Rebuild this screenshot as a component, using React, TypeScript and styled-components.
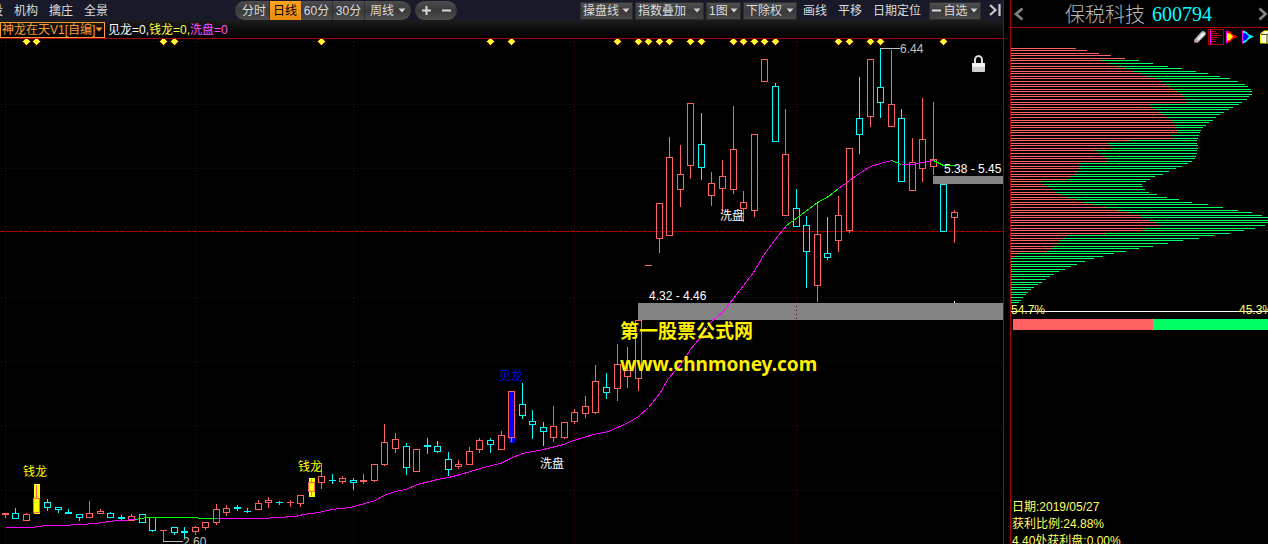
import React from 'react';
import styled, { createGlobalStyle } from 'styled-components';

const RED = '#ff6060';
const CYAN = '#00ffff';
const GREEN = '#00ff60';
const LINE = '#a80000';
const GRID = '#640000';

const Global = createGlobalStyle`
  * { box-sizing: border-box; }
  body { margin: 0; background: #000; }
  button, select, h1 { font: inherit; margin: 0; }
`;

const Page = styled.div`
  display: flex;
  gap: 6px;
  height: 100vh;
  overflow: hidden;
  background: #000;
  font: 12px/14px 'Liberation Sans', 'Noto Sans CJK SC', sans-serif;
  color: #dcdcdc;
  white-space: nowrap;
`;

const ChartPane = styled.main`
  flex: 1;
  min-width: 0;
  display: flex;
  flex-direction: column;
  border-right: 1px solid ${LINE};
`;

const Toolbar = styled.div`
  display: flex;
  align-items: center;
  height: 20px;
  background: #181a29;
`;

const MenuGroup = styled.nav<{ $width?: number }>`
  display: flex;
  gap: 11px;
  padding-top: 1px;
  ${(p) => p.$width && `width: ${p.$width}px;`}
`;

const MenuButton = styled.button<{ $clip?: boolean }>`
  padding: 0;
  border: 0;
  background: none;
  color: #dcdcdc;
  ${(p) => p.$clip && 'display: flex; justify-content: flex-end; width: 3px; overflow: hidden;'}
`;

const Pill = styled.div<{ $gap?: boolean }>`
  display: flex;
  align-items: center;
  height: 19px;
  margin-top: 1px;
  overflow: hidden;
  border-radius: 10px;
  background: linear-gradient(#4c4c4c, #3a3a3a 50%, #4e4e4e);
  ${(p) => p.$gap && 'margin-left: 4px; padding: 0 6px; gap: 10px;'}
`;

const Period = styled.button<{ $active?: boolean; $width: number }>`
  display: flex;
  align-items: center;
  justify-content: center;
  gap: 4px;
  width: ${(p) => p.$width}px;
  height: 19px;
  padding: 0;
  border: 0;
  border-right: 1px solid ${(p) => (p.$active ? '#f7941d' : '#303030')};
  background: ${(p) => (p.$active ? 'linear-gradient(#ffa51f, #e88a0c)' : 'none')};
  color: ${(p) => (p.$active ? '#000' : '#dcdcdc')};
  &:first-child { padding-left: 4px; }
  &:last-child { border-right: 0; }
`;

const RoundButton = styled.button`
  display: flex;
  align-items: center;
  justify-content: center;
  width: 10px;
  height: 19px;
  padding: 0;
  border: 0;
  background: none;
`;

const Tools = styled.div`
  display: flex;
  align-items: center;
  gap: 2px;
  margin-left: auto;
  padding-right: 2px;
`;

const ToolLinks = styled.div`
  display: flex;
  gap: 11px;
  padding: 1px 6px 0 4px;
`;

const DropButton = styled.button<{ $width: number }>`
  display: flex;
  align-items: center;
  justify-content: space-between;
  width: ${(p) => p.$width}px;
  height: 18px;
  margin-top: 1px;
  padding: 0 2px;
  border: 1px solid #2c2c2c;
  background: linear-gradient(#505050, #3a3a3a 50%, #464646);
  color: #dcdcdc;
`;

const EndButton = styled.button`
  display: flex;
  margin-left: 6px;
  padding: 0;
  border: 0;
  background: none;
`;

const FormulaBar = styled.div`
  display: flex;
  align-items: center;
  height: 19px;
  border-bottom: 1px solid ${LINE};
  background: linear-gradient(#1c1c1c, #000);
`;

const FormulaPicker = styled.label`
  display: flex;
  align-items: center;
  width: 105px;
  height: 16px;
  margin: 1px 3px 0 0;
  border: 1px solid #ff9933;
`;

const FormulaSelect = styled.select`
  appearance: none;
  width: 94px;
  height: 14px;
  padding: 0 0 0 1px;
  border: 0;
  outline: 0;
  background: none;
  color: #ff9933;
`;

const Reading = styled.span<{ $color: string }>`
  padding-top: 2px;
  color: ${(p) => p.$color};
`;

const Plot = styled.svg`
  flex: 1;
  min-height: 0;
  display: block;
  width: 100%;
  font-family: 'Liberation Sans', 'Noto Sans CJK SC', sans-serif;
`;

const SidePane = styled.aside`
  flex: 0 0 258px;
  display: flex;
  flex-direction: column;
  overflow: hidden;
  border-left: 1px solid ${LINE};
`;

const StockHeader = styled.header`
  display: flex;
  align-items: center;
  height: 28px;
  padding-left: 3px;
  border-bottom: 1px solid ${LINE};
`;

const StockTitle = styled.h1`
  display: flex;
  gap: 7px;
  width: 200px;
  margin: 0 -4px 0 41px;
  font: 300 20px/26px 'Noto Sans CJK SC', sans-serif;
  color: #b8b8b8;
`;

const Code = styled.span`
  font: 20px/26px 'Liberation Serif', serif;
  color: ${CYAN};
`;

const ArrowButton = styled.button<{ $next?: boolean }>`
  flex: none;
  display: flex;
  margin-left: ${(p) => (p.$next ? 14 : 0)}px;
  padding: 0;
  border: 0;
  background: none;
`;

const IconRow = styled.div`
  display: flex;
  align-items: center;
  height: 20px;
  padding: 0 0 2px 181px;
`;

const IconButton = styled.button<{ $active?: boolean }>`
  flex: none;
  display: flex;
  align-items: center;
  justify-content: center;
  width: 16px;
  height: 16px;
  padding: 0;
  border: 1px solid ${(p) => (p.$active ? LINE : 'transparent')};
  background: none;
`;

const Chips = styled.svg`
  display: block;
  width: 100%;
  height: 256px;
`;

const Ratio = styled.div`
  display: flex;
  justify-content: space-between;
  height: 15px;
  line-height: 13px;
  width: 262px;
  color: #ffff60;
  background: linear-gradient(#fff, #fff) 0 7px / 100% 1px no-repeat;
`;

const RatioBar = styled.div`
  display: flex;
  height: 11px;
  margin-left: 2px;
  background: ${GREEN};
`;

const RatioFill = styled.div`
  background: ${RED};
`;

const Summary = styled.div`
  margin-top: auto;
  height: 45px;
  padding-left: 1px;
  line-height: 17px;
  color: #ffff60;
`;

// [colour, high, body top, body bottom, low], one row for each trading day
type Candle = [string, number, number, number, number];
const r = RED;
const c = CYAN;
const candles: Candle[] = [
  [r, 513, 513, 514, 517], [c, 508, 513, 518, 518], [r, 513, 514, 520, 520], [r, 485, 498, 512, 512],
  [c, 499, 502, 507, 510], [c, 507, 507, 509, 512], [c, 509, 512, 513, 513], [c, 514, 514, 517, 520],
  [r, 501, 513, 517, 517], [r, 509, 511, 513, 513], [c, 512, 513, 517, 517], [c, 515, 517, 518, 520],
  [r, 514, 516, 520, 520], [c, 514, 514, 522, 522], [c, 517, 517, 530, 531], [r, 530, 530, 530, 541],
  [c, 527, 527, 532, 534], [c, 527, 531, 532, 538], [r, 526, 527, 531, 534], [r, 522, 522, 527, 529],
  [r, 504, 509, 522, 524], [r, 505, 508, 512, 515], [c, 505, 507, 508, 510], [c, 508, 511, 511, 512],
  [r, 500, 503, 509, 509], [r, 497, 500, 502, 507], [c, 501, 502, 502, 504], [r, 500, 502, 502, 506],
  [r, 495, 495, 503, 506], [r, 479, 482, 491, 495], [r, 463, 476, 482, 488], [c, 474, 480, 480, 483],
  [r, 476, 478, 481, 483], [c, 478, 480, 482, 489], [r, 474, 480, 481, 483], [r, 464, 464, 480, 481],
  [r, 424, 442, 464, 465], [r, 433, 439, 448, 452], [c, 443, 446, 467, 474], [r, 449, 449, 471, 471],
  [c, 438, 445, 446, 453], [c, 441, 446, 451, 452], [c, 452, 459, 469, 475], [r, 460, 464, 466, 468],
  [r, 447, 451, 464, 464], [r, 438, 440, 449, 452], [c, 438, 440, 444, 452], [r, 431, 435, 449, 449],
  [r, 391, 391, 437, 441], [c, 383, 404, 415, 418], [c, 410, 421, 424, 438], [c, 422, 427, 431, 445],
  [r, 406, 426, 437, 441], [r, 422, 422, 437, 438], [r, 409, 412, 421, 423], [r, 396, 406, 413, 417],
  [r, 365, 381, 412, 413], [c, 373, 387, 392, 398], [r, 344, 364, 388, 400], [r, 347, 370, 376, 387],
  [r, 320, 320, 378, 390], [r, 265, 265, 265, 265], [r, 203, 203, 238, 252], [r, 137, 157, 235, 235],
  [r, 145, 174, 189, 206], [r, 103, 103, 165, 178], [c, 113, 144, 167, 179], [r, 172, 183, 195, 205],
  [r, 160, 176, 188, 212], [r, 106, 149, 189, 193], [r, 191, 202, 208, 221], [r, 134, 134, 210, 216],
  [r, 59, 59, 81, 81], [c, 83, 86, 141, 141], [r, 109, 154, 215, 215], [c, 189, 208, 226, 226],
  [c, 216, 225, 251, 287], [r, 202, 234, 285, 301], [c, 217, 253, 257, 259], [r, 196, 215, 240, 251],
  [r, 148, 148, 230, 232], [c, 77, 118, 134, 153], [r, 59, 59, 116, 126], [c, 48, 87, 102, 117],
  [r, 50, 104, 126, 126], [c, 109, 118, 181, 181], [r, 138, 162, 190, 190], [r, 98, 139, 168, 181],
  [r, 102, 159, 166, 174], [c, 184, 184, 231, 231], [r, 210, 212, 217, 242],
];
const dayX = (i: number) => Math.floor(5.3 + 10.547 * i);

const eventDays = [2, 3, 15, 16, 30, 46, 48, 58, 60, 61, 62, 63, 65, 66, 69, 70, 71, 72, 73, 79, 80, 82, 83, 89];

const rising = '#ff00ff';
const falling = '#00ff00';
const average: [string, string][] = [
  [rising, '5,527 31,527 45,525 62,525 80,524 95,523 108,521 120,520 135,519'],
  [falling, '135,519 147,517 190,517 205,518 216,518'],
  [rising, '216,518 243,518 262,518 275,517 295,516 303,514 318,512 331,509 350,507 364,503 375,500 383,495 395,491 405,489 417,484 437,479 448,477 460,474 470,471 487,466 500,463 510,458 522,453 543,449 563,444 573,440 593,434 608,431 617,427 628,422 638,416 648,407 660,392 668,378 682,362 690,349 700,337 710,322 722,312 733,298 753,272 763,255 774,240 786,225'],
  [falling, '786,225 797,217 817,202 828,196 838,188'],
  [rising, '838,188 849,180 859,173 870,166 880,163 891,160'],
  [falling, '891,160 901,164'],
  [rising, '901,164 912,164 922,162 933,160'],
  [falling, '933,160 943,165 954,165'],
];

const marks = [
  { x: 23, y: 476, text: '钱龙', fill: '#ffff00' },
  { x: 298, y: 471, text: '钱龙', fill: '#ffff00' },
  { x: 499, y: 380, text: '见龙', fill: '#0000ff' },
  { x: 540, y: 468, text: '洗盘', fill: '#ffffff' },
  { x: 720, y: 220, text: '洗盘', fill: '#ffffff' },
  { x: 649, y: 300, text: '4.32 - 4.46', fill: '#ffffff' },
  { x: 944, y: 173, text: '5.38 - 5.45', fill: '#ffffff' },
  { x: 900, y: 53, text: '6.44', fill: '#c0c0c0' },
  { x: 183, y: 546, text: '2.60', fill: '#c0c0c0' },
];

// chip distribution: full length and profitable length of each price level
const chipTotal = [
  65, 76, 88, 100, 114, 128, 142, 157, 171, 185, 197, 209, 219, 227, 234, 237, 240, 241, 241, 238, 236, 231, 228, 222, 218,
  213, 209, 205, 202, 198, 195, 192, 190, 189, 188, 187, 186, 186, 187, 187, 186, 186, 185, 184, 181, 177, 171, 165, 158, 152,
  144, 139, 135, 131, 132, 134, 138, 146, 156, 168, 181, 197, 212, 227, 241, 251, 262, 262, 262, 254, 244, 233, 219, 203, 188,
  172, 157, 142, 128, 115, 103, 92, 83, 74, 66, 60, 54, 48, 43, 39, 35, 31, 27, 23, 20, 17, 15, 12, 10, 8,
];
const chipRed = [
  65, 76, 88, 100, 114, 90, 98, 107, 115, 123, 130, 137, 144, 150, 155, 159, 163, 167, 170, 172, 175, 176, 139, 140, 145, 149,
  153, 157, 160, 162, 164, 165, 166, 167, 161, 162, 118, 96, 98, 100, 84, 89, 93, 96, 97, 69, 69, 68, 66, 64, 60, 57, 31, 33,
  37, 41, 45, 51, 57, 65, 73, 83, 94, 106, 118, 129, 130, 138, 144, 148, 135, 132, 95, 56, 53, 49, 46, 43, 40, 37, 7, 5,
];

const Caret = ({ color = '#d0d0d0' }: { color?: string }) => (
  <svg width="8" height="5" viewBox="0 0 8 5" aria-hidden="true">
    <path d="M0.500 0.500h7L4 4.500z" fill={color} />
  </svg>
);

const Chevron = ({ right }: { right?: boolean }) => (
  <svg width="10" height="14" viewBox="0 0 10 14" aria-hidden="true">
    <path d={right ? 'M1.5 1.5L7.5 7L1.5 12.5' : 'M8.5 1.5L2 7L8.5 12.5'} fill="none" stroke="#848484" strokeWidth="2.6" />
  </svg>
);

function CandleShape({ candle, x }: { candle: Candle; x: number }) {
  const [color, high, top, bottom, low] = candle;
  return (
    <g fill={color}>
      {high < top && <rect x={x} y={high} width="1" height={top - high} />}
      {low > bottom && <rect x={x} y={bottom + 1} width="1" height={low - bottom} />}
      {bottom - top < 2 ? (
        <rect x={x - 3} y={top} width="7" height={bottom - top + 1} />
      ) : (
        <path fillRule="evenodd" d={`M${x - 3} ${top}h7v${bottom - top + 1}h-7zM${x - 2} ${top + 1}v${bottom - top - 1}h5v${-(bottom - top - 1)}z`} />
      )}
    </g>
  );
}

function PriceChart() {
  return (
    <Plot role="img" aria-label="日线">
      <g transform="translate(0 -39)">
        <rect x="638" y="303" width="100%" height="17" fill="#848484" />
        <rect x="933" y="176" width="100%" height="8" fill="#848484" />
        <g stroke={GRID} strokeDasharray="1 3" shapeRendering="crispEdges">
          {[41, 104, 168, 297, 361, 425, 490].map((y) => (
            <line key={y} x1="1" x2="100%" y1={y + 0.5} y2={y + 0.5} />
          ))}
          {[5, 195, 353, 574, 796].map((x) => (
            <line key={x} x1={x + 0.5} x2={x + 0.5} y1="42" y2="544" />
          ))}
        </g>
        <line x1="0" x2="100%" y1="231.5" y2="231.5" stroke={LINE} strokeDasharray="5 1" shapeRendering="crispEdges" />
        <g fill="#ffff00">
          <rect x="34" y="484" width="6" height="30" />
          <rect x="309" y="478" width="6" height="19" />
        </g>
        <rect x="509" y="392" width="6" height="51" fill="#0000ff" />
        {candles.map((candle, i) => (
          <CandleShape key={i} candle={candle} x={dayX(i)} />
        ))}
        {average.map(([color, points], i) => (
          <polyline key={i} points={points} transform="translate(0.5 0.5)" fill="none" stroke={color} shapeRendering="crispEdges" />
        ))}
        {eventDays.map((day) => (
          <path key={day} d={`M${dayX(day) + 0.5} 37.5l4 4l-4 4l-4 -4z`} fill="#ffff30" stroke="#900000" strokeWidth="0.8" />
        ))}
        <path d="M880 48.5h20M163 541.5h20" stroke="#c0c0c0" />
        <rect x="954" y="301" width="1" height="2" fill="#fff" />
        {marks.map((m) => (
          <text key={`${m.x}-${m.y}`} x={m.x} y={m.y} fontSize="12" fill={m.fill}>
            {m.text}
          </text>
        ))}
        <g fill="#fff000" fontSize="19" fontWeight="bold">
          <text x="620" y="338">第一股票公式网</text>
          <text x="620" y="371" fontFamily="'Noto Sans', sans-serif">www.chnmoney.com</text>
        </g>
        <g>
          <path d="M975 64v-4a3.5 4 0 0 1 7 0v4" fill="none" stroke="#dedede" strokeWidth="2" />
          <rect x="972" y="63" width="13" height="9" rx="1" fill="#d0d0d0" />
          <rect x="972" y="63" width="13" height="4" rx="1" fill="#f4f4f4" />
        </g>
      </g>
    </Plot>
  );
}

const flagPath = 'M2 0.5L6 3.5L7 5L11 6.5L7 8L6 10L2 13z';

export default function App() {
  return (
    <>
      <Global />
      <Page>
        <ChartPane>
          <Toolbar>
            <MenuGroup $width={235}>
              <MenuButton $clip>投</MenuButton>
              <MenuButton>机构</MenuButton>
              <MenuButton>擒庄</MenuButton>
              <MenuButton>全景</MenuButton>
            </MenuGroup>
            <Pill>
              <Period $width={35}>分时</Period>
              <Period $width={31} $active>日线</Period>
              <Period $width={32}>60分</Period>
              <Period $width={32}>30分</Period>
              <Period $width={46}>周线 <Caret /></Period>
            </Pill>
            <Pill $gap>
              <RoundButton aria-label="放大">
                <svg width="9" height="9" viewBox="0 0 9 9"><path d="M0 4.5h9M4.5 0v9" stroke="#d8d8d8" strokeWidth="2" /></svg>
              </RoundButton>
              <RoundButton aria-label="缩小">
                <svg width="9" height="9" viewBox="0 0 9 9"><path d="M0 4.5h9" stroke="#d8d8d8" strokeWidth="2" /></svg>
              </RoundButton>
            </Pill>
            <Tools>
              <DropButton $width={53}>操盘线 <Caret /></DropButton>
              <DropButton $width={69}>指数叠加 <Caret /></DropButton>
              <DropButton $width={35}>1图 <Caret /></DropButton>
              <DropButton $width={54}>下除权 <Caret /></DropButton>
              <ToolLinks>
                <MenuButton>画线</MenuButton>
                <MenuButton>平移</MenuButton>
                <MenuButton>日期定位</MenuButton>
              </ToolLinks>
              <DropButton $width={52}>
                <svg width="9" height="3" viewBox="0 0 9 3" aria-hidden="true"><path d="M0 1.5h9" stroke="#dcdcdc" strokeWidth="2" /></svg>
                自选 <Caret />
              </DropButton>
              <EndButton aria-label="收起">
                <svg width="12" height="12" viewBox="0 0 12 12">
                  <path d="M1 1L6.5 6L1 11M10.5 0v12" fill="none" stroke="#c8c8c8" strokeWidth="2.2" />
                </svg>
              </EndButton>
            </Tools>
          </Toolbar>
          <FormulaBar>
            <FormulaPicker>
              <FormulaSelect aria-label="公式">
                <option>神龙在天V1[自编]</option>
              </FormulaSelect>
              <Caret color="#ff9933" />
            </FormulaPicker>
            <Reading $color="#ffffff">见龙=0,</Reading>
            <Reading $color="#ffff40">钱龙=0,</Reading>
            <Reading $color="#ff50ff">洗盘=0</Reading>
          </FormulaBar>
          <PriceChart />
        </ChartPane>

        <SidePane>
          <StockHeader>
            <ArrowButton aria-label="上一只"><Chevron /></ArrowButton>
            <StockTitle>
              保税科技 <Code>600794</Code>
            </StockTitle>
            <ArrowButton $next aria-label="下一只"><Chevron right /></ArrowButton>
          </StockHeader>
          <IconRow>
            <IconButton aria-label="擦除">
              <svg width="14" height="14" viewBox="0 0 14 14">
                <path d="M1 10L8.5 1.5L11 1L13 3L12.5 5L5 12.5L2.5 13L1 12z" fill="#b4b4b4" />
                <path d="M4 9L10 2.5L12 4L6 10z" fill="#f2f2f2" />
                <path d="M1 10l4 2.5L2.5 13L1 12z" fill="#b06a6a" />
              </svg>
            </IconButton>
            <IconButton $active aria-label="筹码分布">
              <svg width="14" height="14" viewBox="0 0 14 14" shapeRendering="crispEdges">
                <path d="M1.5 0v14" stroke="#ff00ff" />
                <path d="M2 1.5h5M2 3.5h8M2 5.5h11M2 7.5h7M2 9.5h4M2 11.5h5M2 13.5h2" stroke="#c00000" />
              </svg>
            </IconButton>
            <IconButton aria-label="火焰山">
              <svg width="14" height="14" viewBox="0 0 14 14">
                <path d="M2 0.500L5 1.500L8 4.500L13 6.500L8 9L5 12L2 13.500z" fill="#ff0000" />
                <path d="M2 3L5 3.500L8 6.500L5 10L2 11z" fill="#ffff00" />
                <path d="M1.5 0.5v13" stroke="#ff00ff" />
              </svg>
            </IconButton>
            <IconButton aria-label="活跃度">
              <svg width="14" height="14" viewBox="0 0 14 14">
                <path d="M2 0.500L5 1.500L8 4.500L13 6.500L8 9L5 12L2 13.500z" fill={CYAN} />
                <path d="M2 3L5 3.500L8 6.500L5 10L2 11z" fill="#0000ff" />
                <path d="M1.5 0.5v13" stroke="#ff00ff" />
              </svg>
            </IconButton>
            <IconButton aria-label="说明">
              <svg width="14" height="14" viewBox="0 0 14 14">
                <path d="M3.500 13V4L7 1H14V10L11 13z" fill="#fffbe0" stroke="#ffff00" />
                <path d="M4 4.500h6l4-3.500M10 5v8" fill="none" stroke="#4a4a00" />
              </svg>
            </IconButton>
          </IconRow>
          <Chips role="img" aria-label="筹码分布" shapeRendering="crispEdges">
            {chipTotal.map((total, k) => {
              const y = Math.floor((18 * k) / 7);
              return (
                <g key={k}>
                  <rect y={y} width={total} height="1" fill={GREEN} />
                  <rect y={y} width={chipRed[k] || 0} height="1" fill={RED} />
                </g>
              );
            })}
          </Chips>
          <Ratio>
            <span>54.7%</span>
            <span>45.3%</span>
          </Ratio>
          <RatioBar>
            <RatioFill style={{ width: '55%' }} />
          </RatioBar>
          <Summary>
            <div>日期:2019/05/27</div>
            <div>获利比例:24.88%</div>
            <div>4.40处获利盘:0.00%</div>
          </Summary>
        </SidePane>
      </Page>
    </>
  );
}
